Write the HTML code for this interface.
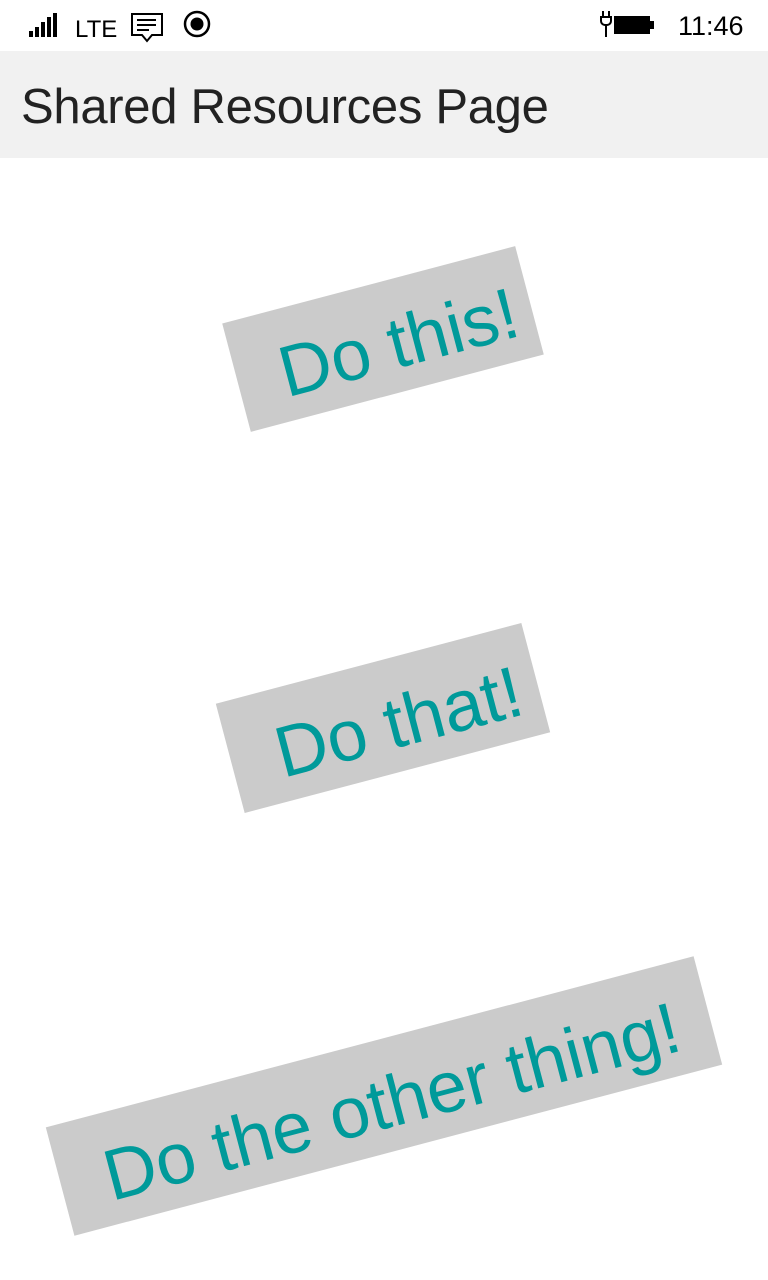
<!DOCTYPE html>
<html><head><meta charset="utf-8"><style>
html,body{margin:0;padding:0;width:768px;height:1280px;background:#fff;overflow:hidden;font-family:"Liberation Sans",sans-serif;position:relative}
.sb{position:absolute;top:0;left:0;width:768px;height:50px}
.hdr{position:absolute;top:51px;left:0;width:768px;height:107px;background:#f1f1f1}
.hdr span{position:absolute;left:21px;top:28px;font-size:49px;color:#222;letter-spacing:-0.3px}
.btn{position:absolute;background:#cbcbcb;transform:translate(-50%,-50%) rotate(-14.8deg);color:#009a9a;font-size:72px;display:flex;align-items:center;justify-content:center;white-space:nowrap}
.btn span{position:relative;left:14px;top:8px}
</style></head><body>
<div class="sb">
<svg width="768" height="50" style="position:absolute;left:0;top:0">
<rect x="29" y="31" width="4" height="6" fill="#000"/><rect x="35" y="27" width="4" height="10" fill="#000"/><rect x="41" y="22" width="4" height="15" fill="#000"/><rect x="47" y="17" width="4" height="20" fill="#000"/><rect x="53" y="13" width="4" height="24" fill="#000"/>
<text x="75" y="37" font-family="Liberation Sans" font-size="24" fill="#000">LTE</text>
<path d="M132 14h30v21h-10l-5 6-5-6h-10z" fill="none" stroke="#000" stroke-width="2"/>
<path d="M137 20h19M137 25h19M137 30h12" stroke="#000" stroke-width="2"/>
<circle cx="197" cy="24" r="12" fill="none" stroke="#000" stroke-width="2.5"/><circle cx="197" cy="24" r="6.5" fill="#000"/>
<path d="M603 11v6M609 11v6M601 17h10v4a4 4 0 0 1-4 4h-2a4 4 0 0 1-4-4z M606 25v12" stroke="#000" stroke-width="2" fill="none"/>
<rect x="614" y="16" width="36" height="18" fill="#000"/><rect x="650" y="21" width="4" height="8" fill="#000"/>
<text x="678" y="35" font-family="Liberation Sans" font-size="27" fill="#000">11:46</text>
</svg>
</div>
<div class="hdr"><span>Shared Resources Page</span></div>
<div class="btn" style="left:383px;top:339px;width:303px;height:112px"><span>Do this!</span></div>
<div class="btn" style="left:383px;top:718px;width:316px;height:113px"><span>Do that!</span></div>
<div class="btn" style="left:384px;top:1096px;width:670px;height:112px"><span style="left:6px">Do the other thing!</span></div>
</body></html>
